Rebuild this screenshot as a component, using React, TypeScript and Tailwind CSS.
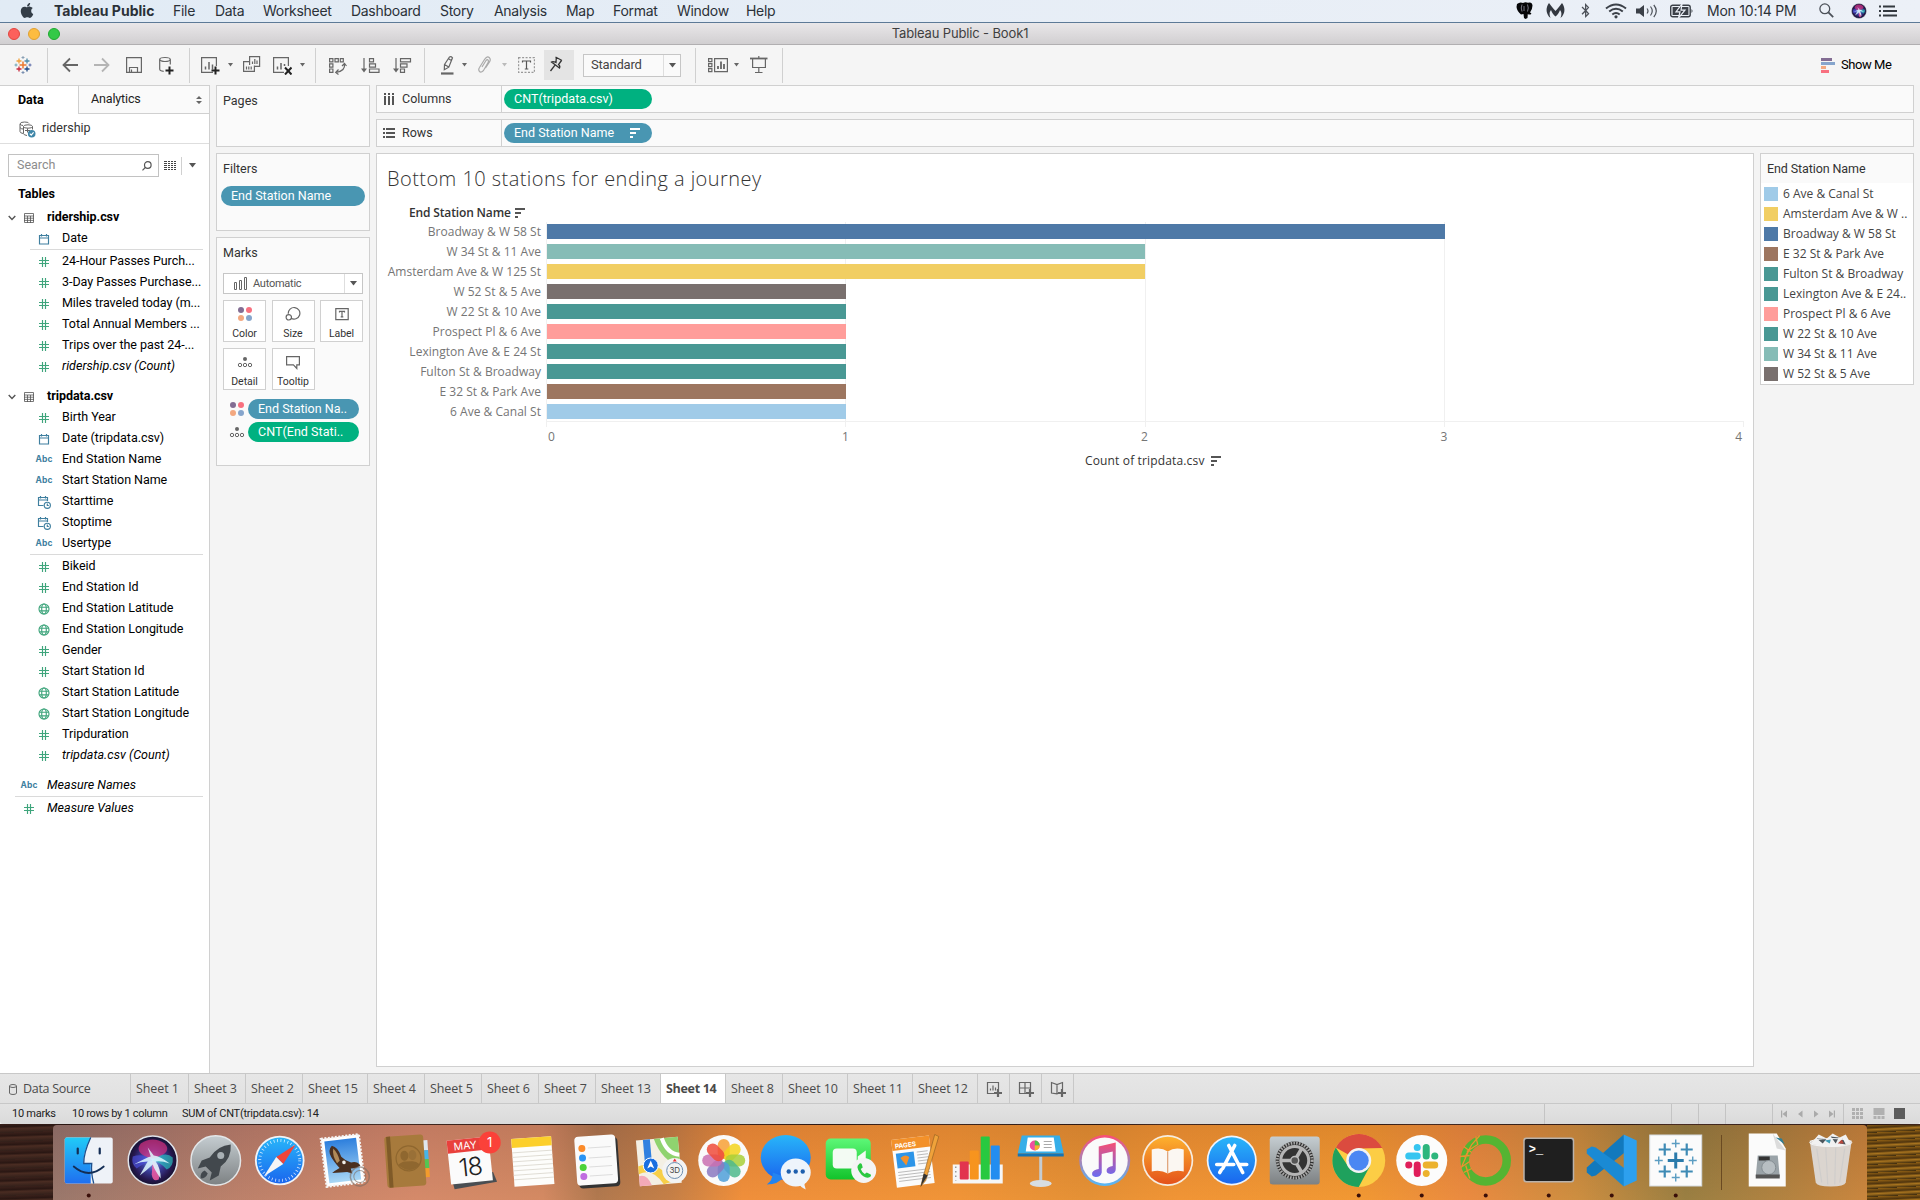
import React from "react";
import { FaApple, FaBluetoothB } from "react-icons/fa";

const UI = "font-['Roboto',sans-serif]";
const SYS = "font-['Inter',sans-serif]";
const VIZ = "font-['Open_Sans',sans-serif]";

/* ---------- macOS menu bar ---------- */

const menus: [string, string][] = [
  ["Tableau Public", "w-[119px] font-bold tracking-[0.02px]"],
  ["File", "w-[42px]"],
  ["Data", "w-[48px]"],
  ["Worksheet", "w-[88px]"],
  ["Dashboard", "w-[89px]"],
  ["Story", "w-[54px]"],
  ["Analysis", "w-[72px]"],
  ["Map", "w-[47px]"],
  ["Format", "w-[64px]"],
  ["Window", "w-[69px]"],
  ["Help", "w-[40px]"],
];

function MenuBar() {
  return (
    <div className={`${SYS} flex h-[23px] shrink-0 items-center border-b border-[#5d7a97] bg-linear-to-r from-[#e1ebf5] to-[#ecf0f7] pb-[1px] text-[14px] tracking-[-0.3px] text-[#2b3138]`}>
      <FaApple className="ml-[19px] mr-[19px] h-[17px] w-[16px] shrink-0 text-[#333d47]" />
      {menus.map(([m, c]) => (
        <span key={m} className={`${c} shrink-0 whitespace-nowrap`}>{m}</span>
      ))}
      <div className="flex-1" />
      <svg className="mr-[13px]" width="17" height="17" viewBox="0 0 17 17">
        <path d="M1 2Q4-.5 7 1 9.500-.5 12 .8 16-.5 16.500 3.500 16.500 7 14 10.500 16 11 15 12.300 13 13 11.800 12L11.500 16 9.500 17 8 16 7.500 12 5 12.500Q1 9 .5 5Z" fill="#060608" />
        <path d="M6 2.500Q4.500 6 6 9.500M11.500 2.500Q13 6 11.500 9.500M8 4v5" fill="none" stroke="#aab" strokeWidth=".7" />
      </svg>
      <svg className="mr-[15px]" width="19" height="17" viewBox="0 0 19 17">
        <path d="M3 1C5 4 7 6 9.500 9C12 6 14 4 16 1C19 5 20 11 14.500 16C16 12 15.500 10 14 8C13 11 11.500 13 9.500 14.500C7.500 13 6 11 5 8C3.500 10 3 12 4.500 16C-1 11 0 5 3 1Z" fill="#333840" />
      </svg>
      <FaBluetoothB className="mr-[14px] h-[15px] w-[11px] text-[#4b5058]" />
      <svg className="mr-[9px]" width="22" height="16" viewBox="0 0 22 16" fill="none" stroke="#3b4048" strokeWidth="2">
        <path d="M1 5.500Q11-2.500 21 5.500M4.200 8.500Q11 3 17.800 8.500M7.300 11.500Q11 8.500 14.700 11.500" />
        <circle cx="11" cy="13.800" r="1.600" fill="#3b4048" stroke="none" />
      </svg>
      <svg className="mr-[12px]" width="22" height="16" viewBox="0 0 22 16" fill="none" stroke="#4b5058" strokeWidth="1.200">
        <path d="M0 5.500h3.500L8 2v12L3.500 10.500H0z" fill="#3b4048" stroke="none" />
        <path d="M11 5.500q2 2.500 0 5M14.500 3.500q3.500 4.500 0 9M17.800 2q5 6 0 12" />
      </svg>
      <svg className="mr-[13px]" width="24" height="14" viewBox="0 0 24 14">
        <rect x="0.700" y="1.200" width="19.500" height="11.600" rx="2" fill="none" stroke="#3b4048" strokeWidth="1.400" />
        <rect x="2.600" y="3" width="15.800" height="8" fill="#3b4048" />
        <path d="M21.500 5q2 2 0 4z" fill="#3b4048" />
        <path d="M12 0L6 7.800h4L8.500 14L15 6.200h-4z" fill="#333840" stroke="#ebeff7" strokeWidth="1.200" />
      </svg>
      <span className="w-[112px] whitespace-nowrap tracking-[-0.22px]">Mon 10:14 PM</span>
      <svg className="mr-[17px]" width="15" height="15" viewBox="0 0 15 15" fill="none" stroke="#4b5058" strokeWidth="1.300">
        <circle cx="5.800" cy="5.800" r="4.900" />
        <path d="M9.400 9.400L14.200 14.200" strokeWidth="1.800" />
      </svg>
      <svg className="mr-[12px]" width="16" height="16" viewBox="-26 -26 52 52">
        <SiriOrb />
      </svg>
      <svg className="mr-[23px]" width="18" height="12" viewBox="0 0 18 12" fill="#33383f">
        <path d="M0 .5h2v2H0zM0 5h2v2H0zM0 9.500h2v2H0zM4 .5h12v2H4zM4 5h14v2H4zM4 9.500h14v2H4z" />
      </svg>
    </div>
  );
}

function TitleBar() {
  return (
    <div className={`${SYS} flex h-[22px] shrink-0 items-center border-b border-[#b1afb1] bg-linear-to-b from-[#e9e7e9] to-[#d1cfd1]`}>
      <div className="flex w-[300px] gap-[8px] pl-[8px]">
        <i className="size-[12px] rounded-full border border-[#e2463f] bg-[#fc605c]" />
        <i className="size-[12px] rounded-full border border-[#e0a032] bg-[#fdbc40]" />
        <i className="size-[12px] rounded-full border border-[#1fa930] bg-[#33c948]" />
      </div>
      <div className="flex-1 pt-[1px] text-center text-[13px] tracking-[-0.14px] text-[#3f3f3f]">Tableau Public - Book1</div>
      <div className="w-[300px]" />
    </div>
  );
}

/* ---------- Toolbar ---------- */

function Sep({ className }: { className: string }) {
  return <div className={`${className} h-[35px] w-px shrink-0 bg-[#d0d0d0]`} />;
}

function Caret({ className, light }: { className: string; light?: boolean }) {
  return (
    <svg className={`${className} shrink-0`} width="5" height="4" viewBox="0 0 5 4">
      <path d="M0 0h5L2.500 3.500z" fill={light ? "#bbb" : "#666"} />
    </svg>
  );
}

function Tool({ w, className, children, color = "#666" }: { w: number; className: string; children: React.ReactNode; color?: string }) {
  return (
    <svg className={`${className} shrink-0`} width={w} height="20" viewBox={`0 0 ${w} 20`} fill="none" stroke={color} strokeWidth="1.200">
      {children}
    </svg>
  );
}

function TableauMark() {
  const p = (x: number, y: number, r: number, c: string, sw = 1.3) => (
    <path key={`${x}-${y}`} d={`M${x - r} ${y}h${2 * r}M${x} ${y - r}v${2 * r}`} stroke={c} strokeWidth={sw} />
  );
  return (
    <Tool w={18} className="ml-[14px] mr-[15px]">
      {p(9, 10, 3.5, "#eb7a2f", 1.5)}
      {p(5, 6, 2.5, "#f0a03c")}
      {p(13, 6, 2.5, "#4e8aa8")}
      {p(5, 14, 2.5, "#c8283c")}
      {p(13, 14, 2.5, "#1f4a86")}
      {p(9, 2.5, 1.5, "#8aa0b4", 1)}
      {p(9, 17.5, 1.5, "#7a8fb0", 1)}
      {p(2, 10, 1.5, "#6fa5b8", 1)}
      {p(16, 10, 1.5, "#5b6aa8", 1)}
    </Tool>
  );
}

function Toolbar() {
  return (
    <div className={`${UI} flex h-[40px] shrink-0 items-center bg-[#f5f5f5]`}>
      <TableauMark />
      <Sep className="mr-[14px]" />
      <Tool w={16} className="mr-[16px]"><path d="M16 10H1.500M8 3.500L1.500 10L8 16.500" strokeWidth="1.800" /></Tool>
      <Tool w={16} className="mr-[16px]" color="#b4b4b4"><path d="M0 10H14.500M8 3.500L14.500 10L8 16.500" strokeWidth="1.800" /></Tool>
      <Tool w={16} className="mr-[17px]"><path d="M.6 2.600h14.800v14.800H.6zM3.500 17v-4.500h8V17M5.500 17v-2.500" /></Tool>
      <Tool w={15} className="mr-[15px]">
        <ellipse cx="6" cy="4.500" rx="5.300" ry="2" />
        <path d="M.7 4.500v9.500q0 2 4 2.300M11.300 4.500v5" />
        <path d="M6.500 15.500h8M10.500 11.500v8" stroke="#222" strokeWidth="2" />
      </Tool>
      <Sep className="mr-[11px]" />
      <Tool w={19} className="mr-[8px]">
        <path d="M12 17.400H.6V2.600h14.800V11" />
        <path d="M4.500 14.500v-3M8 14.500V7M11.500 14.500v-5" strokeWidth="1.500" />
        <path d="M10.500 15.500h8M14.500 11.500v8" stroke="#222" strokeWidth="2" />
      </Tool>
      <Caret className="mr-[10px]" />
      <Tool w={18} className="mr-[12px]">
        <path d="M6.600 10V1.600h10v9.800H11M9.500 9V6.500M11.800 9V4M14 9V5.500M6 6.600H.6v9.800h10.800V10.500M3.500 14.500v-3M5.800 14.500v-3M8.200 14.500v-3" />
      </Tool>
      <Tool w={19} className="mr-[8px]">
        <path d="M11 17.400H.6V2.600h14.800V11" />
        <path d="M4.500 14.500v-3M8 14.500V8M11.500 11V9" strokeWidth="1.500" />
        <path d="M12 12.500l6.500 7M18.500 12.500l-6.500 7" stroke="#222" strokeWidth="2" />
      </Tool>
      <Caret className="mr-[10px]" />
      <Sep className="mr-[13px]" />
      <Tool w={18} className="mr-[14px]">
        <path d="M.6 3.600h3.300v3.300H.6zM6 3.600h3.300v3.300H6zM11.300 3.600h3v3.300h-3zM.6 8.800h3.300v3.300H.6zM.6 14h3.300v3.300H.6z" />
        <path d="M15.500 9q1 7-8.500 8.500M13 11l2.500-2.500L17.500 11M9.500 14.500l-2.800 3L9.500 19.500" />
      </Tool>
      <Tool w={19} className="mr-[13px]">
        <path d="M3 3v12M8.500 3.600h4v3.300h-4zM8.500 8.800h6v3.300h-6zM8.500 14h9.500v3.300H8.500z" />
        <path d="M0 13.500h6l-3 4z" fill="#666" stroke="none" />
      </Tool>
      <Tool w={19} className="mr-[12px]">
        <path d="M3 3v12M7.500 3.600h10v3.300h-10zM7.500 8.800h6.500v3.300H7.500zM7.500 14h4v3.300h-4z" />
        <path d="M0 13.500h6l-3 4z" fill="#666" stroke="none" />
      </Tool>
      <Sep className="mr-[16px]" />
      <Tool w={13} className="mr-[8px]">
        <path d="M3.500 9.500L8.500 2q1.500-1 3 .8L7.800 12.200 3.300 14.800zM3.500 9.500l4.200 2.500M7.500 3.700l3.300 2" />
        <path d="M0 18.500h12.500" strokeWidth="2.200" />
      </Tool>
      <Caret className="mr-[10px]" />
      <Tool w={14} className="mr-[11px]" color="#aaa">
        <path d="M5 12L9 5.500q1.500-1.800 2.300 0 .4 1-.5 2.500L6.500 15.500q-2.500 2.500-4 1-1.500-1.800 0-4L7.500 4.500q2.500-4 5-1.700 1.500 1.700 0 4L8.500 13" />
      </Tool>
      <Caret className="mr-[11px]" light />
      <Tool w={17} className="mr-[9px]" color="#999">
        <path d="M.6 2.600h15.800v14.800H.6z" strokeDasharray="2 1.500" />
        <path d="M4.500 7.500V6h8v1.500M8.500 6v8M6.800 14h3.500" stroke="#555" />
      </Tool>
      <div className="mr-[9px] flex h-[30px] w-[30px] items-center justify-center bg-[#e4e4e4]">
        <Tool w={16} className="-ml-[6px]" color="#333">
          <path d="M7.500 2l6.500 3.500M8.300 2.500L8 7.500Q5 6 3.500 7L11.500 13Q12.500 11 10.500 9.500L13.500 5.500M6.800 10.300L2.500 16" strokeWidth="1.300" />
        </Tool>
      </div>
      <div className="mr-[14px] flex h-[23px] w-[98px] items-center border border-[#c6c6c6] bg-[#fafafa] text-[13px] text-[#444]">
        <span className="w-[79px] pl-[7px] tracking-[-0.2px]">Standard</span>
        <span className="h-full w-px bg-[#dedede]" />
        <svg className="ml-[5px]" width="7" height="5"><path d="M0 0h7L3.500 4.500z" fill="#555" /></svg>
      </div>
      <Sep className="mr-[12px]" />
      <Tool w={20} className="mr-[6px]">
        <path d="M.6 3.600h3.300v3H.6zM.6 8.600h3.300v3H.6zM.6 13.600h3.300v3H.6zM6.600 3.600h12.800v13H6.600z" />
        <path d="M10 14v-3M13 14V6.500M16 14V9" strokeWidth="1.800" />
      </Tool>
      <Caret className="mr-[11px]" />
      <Tool w={18} className="mr-[14px]">
        <path d="M0 3.500h17.500" strokeWidth="1.800" />
        <path d="M8.800 1v2M2.600 4v8.500h12.800V4M8.800 12.500v5M5 17.500h7.500" />
      </Tool>
      <Sep className="" />
      <div className="flex-1" />
      <svg className="mr-[6px]" width="14" height="15" viewBox="0 0 14 15">
        <path d="M0 0h11v3H0z" fill="#836d93" />
        <path d="M0 4h14v3H0z" fill="#86a5cc" />
        <path d="M0 8h5v3H0z" fill="#f3a880" />
        <path d="M0 12h8v3H0z" fill="#f8707f" />
      </svg>
      <span className="w-[79px] text-[13px] tracking-[-0.45px] text-black">Show Me</span>
    </div>
  );
}

/* ---------- Data pane ---------- */

type Kind = "num" | "abc" | "date" | "datetime" | "geo";

function FieldIcon({ kind }: { kind: Kind }) {
  if (kind === "abc")
    return <span className="font-['Inter',sans-serif] text-[8.500px] font-bold leading-none tracking-[0.1px] text-[#3f7f9f]">Abc</span>;
  const blue = kind === "date" || kind === "datetime";
  return (
    <svg width="14" height="14" viewBox="0 0 14 14" fill="none" stroke={blue ? "#3f7f9f" : "#3fa57c"} strokeWidth="1.150">
      {kind === "num" && <path d="M5.500 2v10M8.500 2v10M2 5.500h10M2 8.500h10" />}
      {kind === "date" && <path d="M2.500 3.500h9v8.500h-9zM2.500 6h9M4.500 2v2.500M9.500 2v2.500" />}
      {kind === "datetime" && (
        <>
          <path d="M6.500 10.500h-5v-8h9v3.500M1.500 5h9M3.500 1v2.500M8.500 1v2.500" />
          <circle cx="10.300" cy="10.300" r="3.100" />
          <path d="M10.300 8.500v2h1.500" />
        </>
      )}
      {kind === "geo" && (
        <>
          <circle cx="7" cy="7" r="5" />
          <ellipse cx="7" cy="7" rx="2.300" ry="5" />
          <path d="M2.500 5.200h9M2.500 8.800h9" />
        </>
      )}
    </svg>
  );
}

function Field({ kind, name, italic, root }: { kind: Kind; name: string; italic?: boolean; root?: boolean }) {
  return (
    <div className="flex h-[21px] items-center">
      <span className={`${root ? "ml-[18px]" : "ml-[33px]"} flex w-[22px] justify-center`}><FieldIcon kind={kind} /></span>
      <span className={`${root ? "ml-[7px]" : "ml-[7px]"} ${italic ? "italic tracking-[0.03px]" : "tracking-[-0.04px]"} whitespace-nowrap`}>{name}</span>
    </div>
  );
}

function TableHead({ name }: { name: string }) {
  return (
    <div className="flex h-[21px] items-center">
      <svg className="ml-[8px]" width="8" height="6" viewBox="0 0 8 6" fill="none" stroke="#555" strokeWidth="1.400"><path d="M.7 1L4 4.500 7.300 1" /></svg>
      <svg className="ml-[8px] mr-[13px]" width="10" height="10" viewBox="0 0 10 10" fill="none" stroke="#555">
        <path d="M.5.5h9v9h-9zM0 3h10M0 5.200h10M0 7.400h10M3.500 3v7M6.500 3v7" strokeWidth=".8" />
      </svg>
      <span className="font-bold tracking-[-0.05px]">{name}</span>
    </div>
  );
}

const tripDims: [Kind, string][] = [
  ["num", "Birth Year"],
  ["date", "Date (tripdata.csv)"],
  ["abc", "End Station Name"],
  ["abc", "Start Station Name"],
  ["datetime", "Starttime"],
  ["datetime", "Stoptime"],
  ["abc", "Usertype"],
];
const tripMeasures: [Kind, string][] = [
  ["num", "Bikeid"],
  ["num", "End Station Id"],
  ["geo", "End Station Latitude"],
  ["geo", "End Station Longitude"],
  ["num", "Gender"],
  ["num", "Start Station Id"],
  ["geo", "Start Station Latitude"],
  ["geo", "Start Station Longitude"],
  ["num", "Tripduration"],
];
const rideMeasures = ["24-Hour Passes Purch...", "3-Day Passes Purchase...", "Miles traveled today (m...", "Total Annual Members ...", "Trips over the past 24-..."];

function Divider({ root }: { root?: boolean }) {
  return <div className={`${root ? "ml-[15px]" : "ml-[30px]"} mb-px mr-[6px] h-px bg-[#dadada]`} />;
}

function DataPane() {
  return (
    <div className={`${UI} w-[210px] shrink-0 border-r border-t border-[#d0d0d0] bg-white text-[12.500px] text-black`}>
      <div className="flex h-[28px]">
        <div className="flex w-[78px] items-center pl-[18px] font-bold">Data</div>
        <div className="flex flex-1 items-center border-b border-l border-[#d0d0d0] bg-[#fafafa] pl-[12px] text-[#222]">
          <span className="flex-1 tracking-[-0.15px]">Analytics</span>
          <svg className="mr-[7px]" width="6" height="8"><path d="M0 3h6L3 0zM0 5h6L3 8z" fill="#666" /></svg>
        </div>
      </div>
      <div className="flex h-[30px] items-center border-b border-[#dedede] text-[12.500px] text-[#333]">
        <svg className="ml-[19px] mr-[6px] mt-[1px]" width="17" height="17" viewBox="0 0 17 17" fill="none" stroke="#666">
          <path d="M4 12.500q-3-.5-3-2V3q0-2 4.500-2T10 2.500M1 3q1 1.500 3 1.500M1 6.500q1 1.500 3 1.500" />
          <ellipse cx="9" cy="5.500" rx="4.500" ry="1.700" />
          <path d="M4.500 5.500v7q0 1.500 3.500 2M13.500 5.500v3M6 9.500h5M8.500 7.500v4" />
          <circle cx="12.700" cy="12.700" r="3.800" fill="#3f86a8" stroke="none" />
          <path d="M10.800 12.700l1.400 1.400 2.400-2.700" stroke="#fff" strokeWidth="1.200" />
        </svg>
        ridership
      </div>
      <div className="mt-[10px] flex h-[23px] items-center">
        <div className="ml-[8px] flex h-[23px] w-[151px] items-center border border-[#c2c2c2] pl-[8px] text-[#8c8c8c]">
          <span className="flex-1">Search</span>
          <svg className="mr-[6px]" width="10" height="10" viewBox="0 0 10 10" fill="none" stroke="#555" strokeWidth="1.200"><circle cx="5.800" cy="4" r="3.300" /><path d="M3.400 6.300L.5 9.300" /></svg>
        </div>
        <svg className="ml-[5px]" width="12" height="9" viewBox="0 0 12 9" fill="#444"><path d="M0 0h3v1H0zM4 0h2v1H4zM7 0h2v1H7zM10 0h2v1h-2zM0 2h3v1H0zM4 2h2v1H4zM7 2h2v1H7zM10 2h2v1h-2zM0 4h3v1H0zM4 4h2v1H4zM7 4h2v1H7zM10 4h2v1h-2zM0 6h3v1H0zM4 6h2v1H4zM7 6h2v1H7zM10 6h2v1h-2zM0 8h3v1H0zM4 8h2v1H4zM7 8h2v1H7zM10 8h2v1h-2z" /></svg>
        <span className="ml-[5px] h-[18px] w-px bg-[#d0d0d0]" />
        <svg className="ml-[7px]" width="7" height="5"><path d="M0 0h7L3.500 4.500z" fill="#555" /></svg>
      </div>
      <div className="mt-[6px] flex h-[22px] items-center pl-[18px] font-bold">Tables</div>
      <div className="h-[2px]" />
      <TableHead name="ridership.csv" />
      <Field kind="date" name="Date" />
      <Divider />
      {rideMeasures.map((n) => <Field key={n} kind="num" name={n} />)}
      <Field kind="num" name="ridership.csv (Count)" italic />
      <div className="h-[9px]" />
      <TableHead name="tripdata.csv" />
      {tripDims.map(([k, n]) => <Field key={n} kind={k} name={n} />)}
      <Divider />
      {tripMeasures.map(([k, n]) => <Field key={n} kind={k} name={n} />)}
      <Field kind="num" name="tripdata.csv (Count)" italic />
      <div className="h-[9px]" />
      <Field kind="abc" name="Measure Names" italic root />
      <Divider root />
      <Field kind="num" name="Measure Values" italic root />
    </div>
  );
}

/* ---------- Cards ---------- */

const CARD = "border border-[#d0d0d0] bg-[#fafafa]";

function ColorDots() {
  return (
    <svg width="16" height="16" viewBox="0 0 16 16">
      <circle cx="4" cy="4" r="3" fill="#836d93" />
      <circle cx="12" cy="4" r="3" fill="#f8707f" />
      <circle cx="4" cy="12" r="3" fill="#f3a880" />
      <circle cx="12" cy="12" r="3" fill="#86a5cc" />
    </svg>
  );
}

function DetailDots() {
  return (
    <svg width="16" height="16" viewBox="0 0 16 16" fill="none" stroke="#666">
      <circle cx="8" cy="5" r="2" fill="#666" stroke="none" />
      <circle cx="3" cy="11" r="1.700" />
      <circle cx="8" cy="11" r="1.700" />
      <circle cx="13" cy="11" r="1.700" />
    </svg>
  );
}

function MarkButton({ label, children }: { label: string; children: React.ReactNode }) {
  return (
    <div className="flex h-[42px] w-[43px] flex-col items-center border border-[#d0d0d0] bg-white pt-[5px] text-[10.500px] text-[#333]">
      <div className="flex h-[16px] items-center">{children}</div>
      <div className="mt-[4px] leading-[15px] tracking-[-0.05px]">{label}</div>
    </div>
  );
}

function Pill({ text, className }: { text: string; className: string }) {
  return <div className={`${className} flex h-[20px] items-center whitespace-nowrap rounded-full pl-[10px] pt-[1px] text-[12.500px] text-white`}>{text}</div>;
}

function CardColumn() {
  return (
    <div className={`${UI} ml-[6px] flex w-[154px] shrink-0 flex-col gap-[6px] text-[12.500px] text-[#333]`}>
      <div className={`${CARD} h-[62px] pl-[6px] pt-[6px]`}>Pages</div>
      <div className={`${CARD} h-[78px] pt-[6px]`}>
        <div className="pl-[6px]">Filters</div>
        <Pill text="End Station Name" className="ml-[4px] mt-[7px] w-[144px] bg-[#4996b2]" />
      </div>
      <div className={`${CARD} h-[229px] pl-[6px] pt-[6px]`}>
        <div>Marks</div>
        <div className="mt-[10px] flex h-[21px] w-[140px] items-center border border-[#c6c6c6] bg-white text-[11px]">
          <svg className="ml-[10px]" width="14" height="13" viewBox="0 0 14 13" fill="none" stroke="#666"><path d="M.5 5.500h2v7h-2zM5.500 3.500h2v9h-2zM10.500.5h2v12h-2z" /></svg>
          <span className="flex-1 pl-[5px] pt-[1px] tracking-[-0.25px] text-[#555]">Automatic</span>
          <span className="h-full w-px bg-[#dedede]" />
          <svg className="mx-[5px]" width="7" height="5"><path d="M0 0h7L3.500 4.500z" fill="#555" /></svg>
        </div>
        <div className="mt-[6px] grid grid-cols-[43px_43px_43px] gap-x-[5.500px] gap-y-[6px]">
          <MarkButton label="Color"><ColorDots /></MarkButton>
          <MarkButton label="Size">
            <svg width="16" height="16" viewBox="0 0 16 16" fill="none" stroke="#666" strokeWidth="1.200"><path d="M6 12.200A5.800 5.800 0 1 0 3.300 7.800" /><circle cx="3.800" cy="11.300" r="2.700" /></svg>
          </MarkButton>
          <MarkButton label="Label">
            <svg width="14" height="14" viewBox="0 0 14 14" fill="none" stroke="#666" strokeWidth="1.200"><path d="M.8 1.600h12.400v11H.8zM4.500 5.500V4.300h5v1.200M7 4.300v5.500M5.700 9.900h2.600" /></svg>
          </MarkButton>
          <MarkButton label="Detail"><DetailDots /></MarkButton>
          <MarkButton label="Tooltip">
            <svg width="16" height="16" viewBox="0 0 16 16" fill="none" stroke="#666" strokeWidth="1.200"><path d="M1.600 2.600h12.800v8.300h-2.600v3.500l-3.400-3.500H1.600z" /></svg>
          </MarkButton>
        </div>
        <div className="mt-[9px] flex items-center gap-[3px] pl-[6px]"><ColorDots /><Pill text="End Station Na.." className="w-[111px] bg-[#4996b2]" /></div>
        <div className="mt-[3px] flex items-center gap-[3px] pl-[6px]"><DetailDots /><Pill text="CNT(End Stati.." className="w-[111px] bg-[#00b180] tracking-[0.04px]" /></div>
      </div>
    </div>
  );
}

function SortGlyph({ color, className }: { color: string; className: string }) {
  return (
    <svg className={className} width="10" height="10" viewBox="0 0 10 10" fill={color}><path d="M0 0h10v2H0zM0 4h6v2H0zM0 8h3v2H0z" /></svg>
  );
}

function Shelf({ label, icon, children }: { label: string; icon: React.ReactNode; children: React.ReactNode }) {
  return (
    <div className={`${CARD} flex h-[28px] items-center`}>
      <div className="flex h-full w-[125px] items-center border-r border-[#d0d0d0] pl-[6px]">
        {icon}
        <span className="ml-[7px] text-[#333]">{label}</span>
      </div>
      {children}
    </div>
  );
}

/* ---------- Viz ---------- */

const stations: [string, number, string][] = [
  ["Broadway & W 58 St", 3, "#4e79a7"],
  ["W 34 St & 11 Ave", 2, "#86bcb6"],
  ["Amsterdam Ave & W 125 St", 2, "#f1ce63"],
  ["W 52 St & 5 Ave", 1, "#79706e"],
  ["W 22 St & 10 Ave", 1, "#499894"],
  ["Prospect Pl & 6 Ave", 1, "#ff9d9a"],
  ["Lexington Ave & E 24 St", 1, "#499894"],
  ["Fulton St & Broadway", 1, "#499894"],
  ["E 32 St & Park Ave", 1, "#9d7660"],
  ["6 Ave & Canal St", 1, "#a0cbe8"],
];

function Viz() {
  return (
    <div className={`${VIZ} h-[914px] w-[1378px] border border-[#d0d0d0] bg-white`}>
      <div className="mt-[10px] h-[31px] pl-[10px] text-[20px] font-light leading-[30px] tracking-[0.450px] text-[#333]">Bottom 10 stations for ending a journey</div>
      <div className="mt-[9px] flex h-[18px] items-center pl-[32px] text-[12px] font-semibold tracking-[-0.15px] text-[#333]">
        End Station Name
        <SortGlyph color="#555" className="ml-[4px]" />
      </div>
      <div className="relative flex">
        <div className="w-[164px] text-right text-[12px] tracking-[0.03px] text-[#757575]">
          {stations.map(([n]) => <div key={n} className="h-[20px] whitespace-nowrap leading-[19px]">{n}</div>)}
        </div>
        <div className="ml-[5px] grid h-[205px] w-[1198px] grid-cols-4 border-l border-[#f0f0f0]">
          <i className="border-r border-[#f0f0f0]" />
          <i className="border-r border-[#f0f0f0]" />
          <i className="border-r border-[#f0f0f0]" />
          <i className="h-[5px] self-end border-r border-[#f0f0f0]" />
        </div>
        <div className="absolute left-[169px] top-0 h-[200px] w-[1198px] border-b border-[#f0f0f0] bg-transparent pl-px">
          {stations.map(([n, v, c]) => (
            <div key={n} className="flex h-[20px] items-center pb-[1px]">
              <div className="h-[15px]" style={{ width: v * 299.2, backgroundColor: c }} />
            </div>
          ))}
        </div>
      </div>
      <div className="ml-[170px] mt-[1px] flex h-[18px] text-[12px] leading-[18px] text-[#757575]">
        <span className="w-[149px] pl-px">0</span>
        <span className="w-[299px] text-center">1</span>
        <span className="w-[299px] text-center">2</span>
        <span className="w-[300px] text-center">3</span>
        <span className="w-[148px] text-right">4</span>
      </div>
      <div className="mt-[5px] flex h-[20px] items-center pl-[708px] text-[12px] font-medium tracking-[0.15px] text-[#333]">
        Count of tripdata.csv
        <SortGlyph color="#555" className="ml-[6px]" />
      </div>
    </div>
  );
}

const legend: [string, string][] = [
  ["6 Ave & Canal St", "#a0cbe8"],
  ["Amsterdam Ave & W ..", "#f1ce63"],
  ["Broadway & W 58 St", "#4e79a7"],
  ["E 32 St & Park Ave", "#9d7660"],
  ["Fulton St & Broadway", "#499894"],
  ["Lexington Ave & E 24..", "#499894"],
  ["Prospect Pl & 6 Ave", "#ff9d9a"],
  ["W 22 St & 10 Ave", "#499894"],
  ["W 34 St & 11 Ave", "#86bcb6"],
  ["W 52 St & 5 Ave", "#79706e"],
];

function Legend() {
  return (
    <div className="h-[232px] w-[154px] border border-[#d0d0d0] bg-white">
      <div className={`${UI} flex h-[29px] items-center bg-[#fafafa] pl-[6px] pt-[2px] text-[12.500px] tracking-[-0.1px] text-[#333]`}>End Station Name</div>
      <div className={`${VIZ} pt-[1px] text-[12px] text-[#444]`}>
        {legend.map(([n, c]) => (
          <div key={n} className="flex h-[20px] items-center whitespace-nowrap pl-[3px]">
            <i className="mr-[5px] size-[14px] shrink-0" style={{ backgroundColor: c }} />
            {n}
          </div>
        ))}
      </div>
    </div>
  );
}

function MainArea() {
  return (
    <div className={`${UI} ml-[6px] flex w-[1538px] shrink-0 flex-col gap-[6px] text-[12.500px]`}>
      <Shelf label="Columns" icon={<svg width="12" height="12" viewBox="0 0 12 12" fill="#555"><path d="M1 0h2v2H1zM5 0h2v2H5zM9 0h2v2H9zM1 3h2v9H1zM5 3h2v9H5zM9 3h2v9H9z" /></svg>}>
        <Pill text="CNT(tripdata.csv)" className="ml-[2px] w-[148px] bg-[#00b180] tracking-[0.03px]" />
      </Shelf>
      <Shelf label="Rows" icon={<svg width="12" height="12" viewBox="0 0 12 12" fill="#555"><path d="M0 1h2v2H0zM0 5h2v2H0zM0 9h2v2H0zM3 1h9v2H3zM3 5h9v2H3zM3 9h9v2H3z" /></svg>}>
        <div className="ml-[2px] flex h-[20px] w-[148px] items-center rounded-full bg-[#4996b2] pl-[10px] text-white">
          <span className="flex-1">End Station Name</span>
          <SortGlyph color="#fff" className="mr-[12px]" />
        </div>
      </Shelf>
      <div className="flex gap-[6px]">
        <Viz />
        <Legend />
      </div>
    </div>
  );
}

/* ---------- Sheet tabs and status bar ---------- */

const tabs: [string, string][] = [
  ["Sheet 1", "w-[58px]"], ["Sheet 3", "w-[57px]"], ["Sheet 2", "w-[57px]"], ["Sheet 15", "w-[65px]"], ["Sheet 4", "w-[57px]"],
  ["Sheet 5", "w-[57px]"], ["Sheet 6", "w-[57px]"], ["Sheet 7", "w-[57px]"], ["Sheet 13", "w-[65px]"],
  ["Sheet 14", "w-[65px] bg-white font-bold tracking-[-0.3px]"],
  ["Sheet 8", "w-[57px]"], ["Sheet 10", "w-[65px]"], ["Sheet 11", "w-[65px]"], ["Sheet 12", "w-[65px]"],
];

function SheetTabs() {
  const cell = "flex h-full shrink-0 items-center border-r border-[#c8c8c8]";
  return (
    <div className={`${VIZ} flex h-[31px] shrink-0 border-b border-t border-[#c8c8c8] bg-linear-to-b from-[#e6e6e6] to-[#e1e1e1] text-[12.500px] tracking-[-0.1px] text-[#4a4a4a]`}>
      <div className={`${cell} w-[131px] pl-[9px] pt-[1px] tracking-[-0.3px]`}>
        <svg className="mr-[6px]" width="8" height="11" viewBox="0 0 8 11" fill="none" stroke="#666"><path d="M.5 2v7q0 1.500 3.500 1.500T7.500 9V2" /><ellipse cx="4" cy="2" rx="3.500" ry="1.500" /></svg>
        Data Source
      </div>
      {tabs.map(([t, c]) => <div key={t} className={`${cell} ${c} whitespace-nowrap pl-[5px] pt-[2px]`}>{t}</div>)}
      <div className={`${cell} w-[32px] justify-center`}>
        <svg width="16" height="16" viewBox="0 0 16 16" fill="none" stroke="#666"><path d="M8 12.500H1.500v-11h11V8M4.500 9.500v-2M7 9.500v-5M9.500 9.500v-3" strokeWidth="1.200" /><path d="M8 12h8M12 8v8" strokeWidth="2.200" /></svg>
      </div>
      <div className={`${cell} w-[32px] justify-center`}>
        <svg width="16" height="16" viewBox="0 0 16 16" fill="none" stroke="#666"><path d="M8 12.500H1.500v-11h11V8M7 1.500v11M1.500 7h11" strokeWidth="1.200" /><path d="M8 12h8M12 8v8" strokeWidth="2.200" /></svg>
      </div>
      <div className={`${cell} w-[32px] justify-center`}>
        <svg width="16" height="16" viewBox="0 0 16 16" fill="none" stroke="#666"><path d="M8 12.500L7 12.800 1.500 12V1.500L7 3.500l5.500-2V8M7 3.500v9" strokeWidth="1.200" /><path d="M8 12h8M12 8v8" strokeWidth="2.200" /></svg>
      </div>
    </div>
  );
}

function StatusBar() {
  const cell = "h-full shrink-0 border-l border-[#c4c4c4]";
  return (
    <div className={`${UI} flex h-[20px] shrink-0 items-center rounded-b-[3px] bg-linear-to-b from-[#e3e3e3] to-[#dadada] text-[11px] text-[#222]`}>
      <span className="w-[60px] pl-[12px] pt-[1px] tracking-[-0.25px]">10 marks</span>
      <span className="ml-[12px] w-[110px] pt-[1px] tracking-[-0.3px]">10 rows by 1 column</span>
      <span className="pt-[1px] tracking-[-0.23px]">SUM of CNT(tripdata.csv): 14</span>
      <div className="flex-1" />
      <div className={`${cell} w-[127px]`} />
      <div className={`${cell} w-[27px]`} />
      <div className={`${cell} w-[27px]`} />
      <div className={`${cell} w-[47px]`} />
      <div className={`${cell} w-[71px]`}>
        <svg width="70" height="20" viewBox="0 0 70 20" fill="#aaa"><path d="M8 6.500h1.200v7H8zM14 6.500v7L9.500 10zM29.500 6.500v7L25 10zM41 6.500v7L45.500 10zM56 6.500v7l4.500-3.500zM60.800 6.500H62v7h-1.200z" /></svg>
      </div>
      <div className={`${cell} w-[77px]`}>
        <svg width="76" height="20" viewBox="0 0 76 20" fill="#b0b0b0">
          <path d="M8 4h3v3H8zM12 4h3v3h-3zM16 4h3v3h-3zM8 8h3v3H8zM12 8h3v3h-3zM16 8h3v3h-3zM8 12h3v3H8zM12 12h3v3h-3zM16 12h3v3h-3zM29.500 4h11v7h-11zM29.500 12h3v3h-3zM33.500 12h3v3h-3zM37.500 12h3v3h-3z" />
          <path d="M50 4h11v11H50z" fill="#5c5c5c" />
        </svg>
      </div>
    </div>
  );
}

/* ---------- Dock ---------- */

function SiriOrb() {
  return (
    <>
      <defs>
        <radialGradient id="siri"><stop offset="0" stopColor="#8fb4ff" /><stop offset=".45" stopColor="#3b3f9c" /><stop offset=".8" stopColor="#26184f" /><stop offset="1" stopColor="#15122f" /></radialGradient>
      </defs>
      <circle r="24.500" fill="url(#siri)" stroke="#dfe3ea" strokeWidth="1.500" />
      <path d="M-3-2Q-19-8-12-17 0-25 12-17 20-8 2-2Z" fill="#d5307e" opacity=".7" />
      <path d="M0 0Q-10-8-20-4-22 4-16 8-8 2 0 0Z" fill="#4a4fd8" opacity=".7" />
      <path d="M0 0Q12-10 20-3 21 6 14 9 8 2 0 0Z" fill="#28c8c0" opacity=".65" />
      <path d="M0 0Q10 8 6 19 0 22-1 14Z" fill="#ff5fa8" opacity=".8" />
      <path d="M-19 4Q-6-3-2-4L-5-13 1-5Q8-4 17 3 8 0 3 1 8 8 8 18 2 10 0 4-6 10-13 15-8 6-5 1-12 1-19 4Z" fill="#dffaff" opacity=".85" />
    </>
  );
}

const petals = ["#f7a035", "#f3d31c", "#a8cf38", "#4fb98c", "#4f9fd8", "#8a78c0", "#c96fb0", "#ee4b3a"];

const dockApps: { name: string; dot?: boolean; art: React.ReactNode }[] = [
  {
    name: "finder", dot: true, art: (
      <>
        <rect x="-24" y="-23" width="48" height="46" rx="2" fill="#eef2f8" />
        <path d="M-22-23H2Q-6-8-5 3H2V23H-22q-2 0-2-2V-21q0-2 2-2Z" fill="url(#finder)" />
        <path d="M2-23Q-5-8-5 3H3Q2 12 5 23" fill="none" stroke="#1d4f8d" strokeWidth="1.300" />
        <path d="M-11-12v5M11-12v5" stroke="#132d55" strokeWidth="2.200" strokeLinecap="round" />
        <path d="M-15 6Q0 19 15 6" fill="none" stroke="#132d55" strokeWidth="1.800" strokeLinecap="round" />
      </>
    ),
  },
  { name: "siri", art: <SiriOrb /> },
  {
    name: "launchpad", art: (
      <>
        <circle r="24.800" fill="url(#grey)" stroke="#e3e6e8" strokeWidth="1.500" />
        <path d="M15-16Q2-15-6-3L-14 0-18 8-10 6-4 12-6 20 3 15 5 6Q16-2 15-16Z" fill="#42484d" />
        <circle cx="5" cy="-5" r="3.500" fill="#a8b0b4" />
        <path d="M-11 10q-5 2-4 8 5 0 7-5z" fill="#42484d" />
      </>
    ),
  },
  {
    name: "safari", art: (
      <>
        <circle r="24.800" fill="#f2f4f7" />
        <circle r="23" fill="url(#blue)" />
        <circle r="20" fill="none" stroke="#fff" strokeWidth="3" strokeDasharray=".8 2.700" opacity=".8" />
        <path d="M16-16L3.500 3.500-3.500-3.500Z" fill="#f0453a" />
        <path d="M-16 16L3.500 3.500-3.500-3.500Z" fill="#f5f5f5" />
      </>
    ),
  },
  {
    name: "mail", art: (
      <g transform="rotate(-7)">
        <rect x="-19" y="-24" width="38" height="48" fill="#fff" stroke="#f5f5f5" strokeWidth="2.500" strokeDasharray="2 1.500" />
        <rect x="-16" y="-21" width="32" height="42" fill="url(#mail)" />
        <path d="M-9-16Q-3-14-1-4 2 0 8 3 14 2 17 7 12 10 7 9L8 14 3 12Q-3 12-12 11-9 9-4 7-9 0-11-5-14-12-9-16Z" fill="#4a3020" />
        <path d="M-8-13Q-4-8-3 0L-6 2Q-10-6-8-13Z" fill="#b08a58" />
        <circle cx="1" cy="2" r="1.800" fill="#f1efe9" />
        <circle cx="15" cy="18" r="9.500" fill="none" stroke="#7b6a60" strokeWidth="1.500" opacity=".6" />
        <circle cx="15" cy="18" r="6" fill="none" stroke="#7b6a60" opacity=".6" />
      </g>
    ),
  },
  {
    name: "contacts", art: (
      <g transform="rotate(-4)">
        <path d="M16-19h6v10h-6z" fill="#dfe7ee" /><path d="M16-9h6v9h-6z" fill="#47b4e8" /><path d="M16 0h6v9h-6z" fill="#55c552" /><path d="M16 9h6v9h-6z" fill="#f39c2c" />
        <rect x="-21" y="-25" width="39" height="51" rx="3" fill="#a77a3c" />
        <path d="M-19-25h4V26h-4z" fill="#7f5a28" />
        <circle cx="2" cy="-2" r="12.500" fill="none" stroke="#8f672f" strokeWidth="1.200" />
        <ellipse cx="-2" cy="-5" rx="4" ry="5" fill="#8f672f" /><ellipse cx="6" cy="-5" rx="4" ry="5" fill="#997037" />
        <path d="M-9 4q5-4 8-3h6q4 0 8 4-10 10-22-1z" fill="#8f672f" />
      </g>
    ),
  },
  {
    name: "calendar", art: (
      <>
        <g transform="rotate(-6)">
          <path d="M-20 16L-18 27 25 24 22 14Z" fill="#4a4e52" />
          <rect x="-21" y="-22" width="42" height="44" fill="#fbfbfb" />
          <rect x="-21" y="-22" width="42" height="13" fill="#e9403c" />
          <text x="-3" y="-11.500" fontSize="10.500" fill="#fff" textAnchor="middle" fontFamily="Inter">MAY</text>
          <text x="0" y="15" fontSize="25" fill="#222" textAnchor="middle" fontFamily="Inter" fontWeight="300" letterSpacing="-1">18</text>
        </g>
        <circle cx="20" cy="-18" r="11" fill="#fb4139" />
        <text x="20" y="-13.500" fontSize="13" fill="#fff" textAnchor="middle" fontFamily="Inter">1</text>
      </>
    ),
  },
  {
    name: "notes", art: (
      <g transform="rotate(-4)">
        <rect x="-20" y="-23" width="40" height="48" fill="#fdfdfb" />
        <rect x="-20" y="-23" width="40" height="9" fill="#fccf2b" />
        <path d="M-20-9h40M-20-4.500h40M-20 0h40M-20 4.500h40M-20 9h40M-20 13.500h40M-20 18h40" stroke="#d9d6cc" strokeWidth=".8" />
      </g>
    ),
  },
  {
    name: "reminders", art: (
      <g transform="rotate(-4)">
        <rect x="-19" y="-22" width="41" height="49" rx="4" fill="#333" />
        <rect x="-21" y="-25" width="41" height="49" rx="4" fill="#fafafa" />
        <path d="M-8-13h23M-8-3h23M-8 6h23M-8 15h23" stroke="#ddd" />
        <circle cx="-14" cy="-13" r="3.500" fill="#fb8b2a" /><circle cx="-14" cy="-3.500" r="3.500" fill="#2a94f4" /><circle cx="-14" cy="6" r="3.500" fill="#4cd33a" /><circle cx="-14" cy="15" r="3.500" fill="#c06ee0" />
      </g>
    ),
  },
  {
    name: "maps", art: (
      <>
        <g transform="rotate(-5)">
          <rect x="-22" y="-22" width="42" height="46" fill="#f3efe4" />
          <path d="M-4-22H20V8Q2 0-4-22Z" fill="#8fd36f" /><path d="M4-22Q8-6 20-4" fill="none" stroke="#fff" strokeWidth="4" />
          <path d="M-22 4Q-4-2 12 22L2 24Q-8 6-22 12Z" fill="#f7cf48" />
          <path d="M-22 14Q-14 12-10 24H-22Z" fill="#f3a9b8" />
          <path d="M-15-22h7V4h-7z" fill="#2f80e0" />
        </g>
        <circle cx="-9" cy="5" r="7.500" fill="#1a6fe0" stroke="#fff" /><path d="M-9 0l3.500 8-3.500-2-3.500 2z" fill="#fff" />
        <circle cx="15" cy="10" r="12.500" fill="#f3f3f3" /><circle cx="15" cy="10" r="8" fill="none" stroke="#6d8fb0" />
        <text x="15" y="13" fontSize="8" textAnchor="middle" fill="#444" fontFamily="Inter">3D</text>
        <path d="M13 1l2-3 2 3z" fill="#e33" />
      </>
    ),
  },
  {
    name: "photos", art: (
      <>
        <circle r="25.500" fill="#fafafa" />
        {petals.map((c, i) => <rect key={c} x="-6" y="-21.500" width="12" height="20" rx="6" fill={c} opacity=".85" transform={`rotate(${i * 45})`} />)}
      </>
    ),
  },
  {
    name: "messages", art: (
      <>
        <ellipse cx="-1" cy="-3" rx="25" ry="22.500" fill="url(#blue)" />
        <path d="M-14 12Q-14 20-20 24-8 24-3 16Z" fill="#2384f0" />
        <ellipse cx="9" cy="12" rx="15" ry="14" fill="#eef4fb" /><path d="M12 23q2 4 7 6-2-4-1-9z" fill="#eef4fb" />
        <circle cx="2" cy="11" r="2.200" fill="#1e5fae" /><circle cx="9" cy="11" r="2.200" fill="#1e5fae" /><circle cx="16" cy="11" r="2.200" fill="#1e5fae" />
      </>
    ),
  },
  {
    name: "facetime", art: (
      <>
        <rect x="-25" y="-22" width="45" height="41" rx="5" fill="url(#green)" />
        <rect x="-18" y="-12" width="24" height="20" rx="4" fill="#f3fbf3" /><path d="M7-4L15-10V6L7 2Z" fill="#f3fbf3" />
        <circle cx="13" cy="10" r="12.500" fill="#f4f4f4" />
        <path d="M8 4q-3 2 1 8t9 5q3-1 2-3l-4-2-2 1.500q-3-2-4-5L12 7l-1-3.500q-1.500-1.500-3 .5z" fill="#2bc840" />
      </>
    ),
  },
  {
    name: "pages", art: (
      <>
        <g transform="rotate(-7)">
          <rect x="-20" y="-23" width="38" height="48" fill="#fbfbfb" /><rect x="-20" y="-23" width="38" height="11" fill="#f3912a" />
          <text x="-17" y="-14" fontSize="6.500" fill="#fff" fontWeight="700" fontFamily="Inter">PAGES</text>
          <rect x="-17" y="-9" width="18" height="15" fill="#2d95e8" /><path d="M-13-4q5-4 9 0l-4 8z" fill="#f3912a" />
          <path d="M4-8h11M4-5h11M4-2h11M4 1h11M4 4h11M-17 10h32M-17 13h32M-17 16h32M-17 19h32" stroke="#b7b7b7" strokeWidth=".9" />
        </g>
        <path d="M21-26L9 18 7 26 12 20 25-24Z" fill="#f0a23a" stroke="#8b5a20" strokeWidth=".6" /><path d="M10 13L7 26 14 15Z" fill="#333" />
      </>
    ),
  },
  {
    name: "numbers", art: (
      <>
        <path d="M-25 4H25V23H-25Z" fill="#f6f6f6" /><path d="M-22 6v14" stroke="#999" strokeWidth="1.500" strokeDasharray="1.500 3" />
        <rect x="-18" y="1" width="9" height="18" rx="1" fill="#e2334e" /><rect x="-8" y="-10" width="9" height="29" rx="1" fill="#f7941e" /><rect x="3" y="-24" width="9" height="43" rx="1" fill="#28c940" /><rect x="13" y="-15" width="9" height="34" rx="1" fill="#238df0" />
      </>
    ),
  },
  {
    name: "keynote", art: (
      <>
        <path d="M-1.500-4h3v28h-3z" fill="#c5ccd2" /><ellipse cy="23" rx="11" ry="3.500" fill="#d7dde2" />
        <path d="M-19-25H19L23-7H-23Z" fill="#36aee8" /><path d="M-23-7H23v3H-23z" fill="#1474b4" />
        <path d="M-13-23H13L15-9H-15Z" fill="#fff" /><circle cx="-6" cy="-15" r="5" fill="#ef4fa0" /><path d="M-6-15V-20a5 5 0 0 1 5 5z" fill="#4dc24a" /><path d="M-6-15h5a5 5 0 0 1-5 5z" fill="#f5b22d" /><path d="M3-19h8M3-16h8M3-13h8" stroke="#aaa" />
      </>
    ),
  },
  {
    name: "music", art: (
      <>
        <circle r="25.500" fill="url(#music)" /><circle r="23" fill="#fafafa" />
        <path d="M-6-14L11-18V8.500Q11 13 6 13.500 1 13 2 9 3 6 8 5.500V-9L-3-6.500V12Q-4 16.500-9 16.500-13.500 16-12.500 12-11 9-6 8.500Z" fill="url(#note)" />
      </>
    ),
  },
  {
    name: "books", art: (
      <>
        <circle r="25.500" fill="#f6ece0" /><circle r="23.800" fill="url(#orange)" />
        <path d="M0-9Q-7-14-16-11V11Q-7 9 0 13 7 9 16 11V-11Q7-14 0-9Z" fill="#fbf7f2" /><path d="M0-9V13" stroke="#d98f5a" />
      </>
    ),
  },
  {
    name: "appstore", art: (
      <>
        <circle r="25" fill="#eef4fb" /><circle r="23.300" fill="url(#blue)" />
        <path d="M3-15L-9 8M-3-15L11 12M-15 4H2M8 4H15M-12 12l1.500-2.500" stroke="#fff" strokeWidth="3.600" strokeLinecap="round" />
      </>
    ),
  },
  {
    name: "preferences", art: (
      <>
        <rect x="-25" y="-24" width="50" height="48" rx="3" fill="url(#grey)" />
        <circle r="19" fill="#2e2e2e" /><circle r="17" fill="none" stroke="#a9a9a9" strokeWidth="4" strokeDasharray="1.500 1.200" />
        <circle r="16" fill="#333" />
        <circle r="14" fill="none" stroke="#b5b5b5" strokeWidth="3" /><path d="M0 0H-13M0 0L7-12M0 0L7 12" stroke="#b5b5b5" strokeWidth="3.500" /><circle r="4" fill="#555" stroke="#c0c0c0" strokeWidth="1.500" />
      </>
    ),
  },
  {
    name: "chrome", dot: true, art: (
      <>
        <circle r="26.500" fill="#fccd45" />
        <path d="M0 0L-23-13A26.500 26.500 0 0 1 23.500-12.500L0-12Z" fill="#db4b3f" />
        <path d="M-23-13A26.500 26.500 0 0 0 0 26.500L11 6-10.500 6Z" fill="#1fa15d" />
        <circle r="12.500" fill="#f3f3f3" /><circle r="10" fill="#4b87f3" />
      </>
    ),
  },
  {
    name: "slack", dot: true, art: (
      <>
        <circle r="25.500" fill="#fcfcfc" />
        <g strokeWidth="7" strokeLinecap="round" fill="none">
          <path d="M-13-4.500H-4.500M-4.500-13v.1" stroke="#36c5f0" /><path d="M4.500-13V-4.500M13-4.500h.1" stroke="#2eb67d" /><path d="M13 4.500H4.500M4.500 13v.1" stroke="#ecb22e" /><path d="M-4.500 13V4.500M-13 4.500h.1" stroke="#e01e5a" />
        </g>
      </>
    ),
  },
  {
    name: "anaconda", dot: true, art: (
      <>
        <circle r="21" fill="none" stroke="#55b432" strokeWidth="8.500" />
        <path d="M-22-14L-14-8M-26-4L-16-5M-25 7L-16 1M-21-3L-14-16-6-25M-24 6L-17-10M-16 18L-20 5M-10-24L-8-16-19-9M-22 12L-14 8" stroke="#ee9030" strokeWidth="1.300" fill="none" />
      </>
    ),
  },
  {
    name: "terminal", dot: true, art: (
      <>
        <rect x="-25.500" y="-23" width="51" height="45" rx="3" fill="#b9b2ab" /><rect x="-24" y="-21.500" width="48" height="42" rx="2" fill="#1f1f1f" />
        <text x="-20" y="-8" fontSize="12" fontWeight="700" fill="#fff" fontFamily="Liberation Mono">&gt;_</text>
      </>
    ),
  },
  {
    name: "vscode", dot: true, art: (
      <>
        <path d="M12-26L-25 7-25 12-20 16-16 15 13-8Z" fill="#1279bd" /><path d="M12 26L-25-7-25-11-20-14-16-13 13 8Z" fill="#1a8ad4" /><path d="M12-26L25-20V20L12 26Z" fill="#2da0ee" />
      </>
    ),
  },
  {
    name: "tableau", dot: true, art: (
      <>
        <rect x="-26" y="-25.500" width="52" height="51" fill="#fbfbfb" stroke="#d5dbe0" />
        <path d="M-8 0H8M0-8V8" stroke="#2b7bab" strokeWidth="3" />
        <path d="M-17-11H-5M-11-17V-5M5-11H17M11-17V-5M-17 11H-5M-11 5V17M5 11H17M11 5V17" stroke="#3f8bb5" strokeWidth="2.200" />
        <path d="M-4-17H4M0-21V-13M-4 17H4M0 13V21M-21 0H-13M-17-4V4M13 0H21M17-4V4" stroke="#5b9dc2" strokeWidth="1.400" />
      </>
    ),
  },
];

function DockSlot({ art, dot }: { art: React.ReactNode; dot?: boolean }) {
  return (
    <svg className="w-[63.480px] shrink-0" height="75" viewBox="-31.740 -35.500 63.480 75">
      {art}
      {dot && <circle cy="35" r="2" fill="#3a0e08" />}
    </svg>
  );
}

const grads: [string, string, string][] = [
  ["finder", "#21cbf7", "#1f6ff0"],
  ["grey", "#c5cdd1", "#7d8183"],
  ["blue", "#28b5f9", "#1a66ee"],
  ["mail", "#2d7fdd", "#a9d7f5"],
  ["green", "#5df777", "#12c32b"],
  ["music", "#fb4d76", "#54b9f6"],
  ["note", "#f74f73", "#6a6af0"],
  ["orange", "#fdb12e", "#e4521b"],
];

function Dock() {
  return (
    <div className="flex h-[76px] shrink-0 bg-[repeating-linear-gradient(178deg,#3a211b_0px,#2a1713_3px,#4a2c22_5px,#33201a_9px)] pt-[1px]">
      <svg className="absolute" width="0" height="0">
        <defs>
          {grads.map(([id, a, b]) => (
            <linearGradient key={id} id={id} x1="0" y1="0" x2="0" y2="1"><stop stopColor={a} /><stop offset="1" stopColor={b} /></linearGradient>
          ))}
        </defs>
      </svg>
      <div className="w-[53px] shrink-0" />
      <div className="flex h-[75px] w-[1814px] shrink-0 rounded-t-[4px] bg-[linear-gradient(to_bottom,rgba(90,50,50,0.12),rgba(255,190,120,0.10)),linear-gradient(to_right,#8f706a_0%,#b47a69_10%,#d08468_20%,#cf8460_27%,#a8714a_30%,#bf7942_34%,#ee8a34_38%,#ef9030_50%,#e28c2e_57%,#ef902e_62%,#f0942b_72%,#e8853a_78%,#c8893a_84%,#8f783c_90%,#a87c3b_95%,#c48038_100%)] pl-[4.200px]">
        {dockApps.map((a) => <DockSlot key={a.name} art={a.art} dot={a.dot} />)}
        <div className="ml-[14px] mr-[13px] mt-[10px] h-[55px] w-px bg-[#6a4a22]" />
        <DockSlot
          art={
            <>
              <path d="M-18-27H10L19-12V26H-18Z" fill="#fbfbfb" /><path d="M6-27L19-10 10-12Z" fill="#dcdcdc" /><path d="M9-23l6 1 3 6z" fill="#2f7f95" />
              <path d="M-9-5H11L13 16H-11Z" fill="#9aa3a8" /><rect x="-8" y="-4" width="11" height="4" fill="#333" /><circle cx="2" cy="7" r="7" fill="#b7bec2" stroke="#858d92" /><path d="M-11 14h24v4h-24z" fill="#555" />
            </>
          }
        />
        <DockSlot
          art={
            <>
              <path d="M-21-20L-15 22Q-14 26 0 26T15 22L21-20Z" fill="#dedcda" opacity=".93" />
              <path d="M-20-17L-12-26-4-22 2-27 9-23 15-26 20-17 8-14-8-14Z" fill="#f1f1f1" />
              <path d="M-14-22l6 5 4-5zM0-24l5 7 3-6zM12-22l-3 5 6 1z" fill="#4d565c" /><path d="M-6-20l5 3 1-4z" fill="#3d9ab5" /><path d="M7-17l4-4 2 4z" fill="#b9483c" />
              <path d="M-14-12l5 34M-5-13l2 37M5-13L4 24M14-12L9 22" stroke="#cfcdcb" strokeWidth="1.200" />
              <ellipse cy="-18" rx="21" ry="4" fill="none" stroke="#f4f4f4" />
            </>
          }
        />
      </div>
      <div className="flex-1 bg-[repeating-linear-gradient(177deg,#8a5c14_0px,#4f340e_3px,#a8741f_5px,#45300f_8px)]" />
    </div>
  );
}

export default function App() {
  return (
    <div className="flex h-[1200px] w-[1920px] flex-col overflow-hidden bg-[#f4f4f4]">
      <MenuBar />
      <TitleBar />
      <Toolbar />
      <div className="flex h-[988px] shrink-0">
        <DataPane />
        <CardColumn />
        <MainArea />
      </div>
      <SheetTabs />
      <StatusBar />
      <Dock />
    </div>
  );
}
